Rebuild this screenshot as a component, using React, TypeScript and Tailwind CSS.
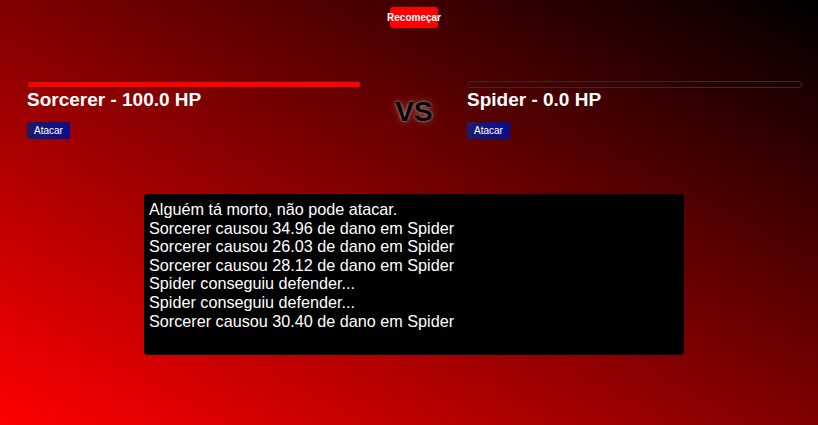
export default function App() {
  const logs = [
    "Alguém tá morto, não pode atacar.",
    "Sorcerer causou 34.96 de dano em Spider",
    "Sorcerer causou 26.03 de dano em Spider",
    "Sorcerer causou 28.12 de dano em Spider",
    "Spider conseguiu defender...",
    "Spider conseguiu defender...",
    "Sorcerer causou 30.40 de dano em Spider",
  ];
  return (
    <div
      className="w-[818px] h-[425px] overflow-hidden bg-[linear-gradient(to_top_right,#ff0000,#000000)] flex flex-col"
      style={{ fontFamily: '"Liberation Sans", Arial, sans-serif' }}
    >
      <div className="pl-[390px] pt-[7px]">
        <button className="w-[48px] h-[21px] bg-[#ff0000] rounded-[3px] text-white text-[10px] font-bold flex items-center justify-center">
          Recomeçar
        </button>
      </div>

      <div className="flex items-start pl-[27px] mt-[53px]">
        <div className="w-[334px] flex flex-col">
          <div className="h-[7px] rounded-[3px] border border-[#6a1414] bg-[#ff0000]" />
          <div className="text-white text-[19px] font-bold leading-[23px]">Sorcerer - 100.0 HP</div>
          <button className="mt-[11px] w-[43px] h-[17px] rounded-[2px] bg-[linear-gradient(to_right,#1c1c68,#0c0c8c)] text-white text-[10px] flex items-center justify-center">
            Atacar
          </button>
        </div>
        <div className="w-[106px] flex justify-center mt-[15px]">
          <div
            className="text-black text-[28px] font-bold leading-[32px]"
            style={{ textShadow: "0 0 3px rgba(255,255,255,0.6), 0 0 8px rgba(255,255,255,0.3)" }}
          >
            VS
          </div>
        </div>
        <div className="w-[335px] flex flex-col">
          <div className="h-[7px] rounded-[3px] border border-[#3a2a2a]" />
          <div className="text-white text-[19px] font-bold leading-[23px]">Spider - 0.0 HP</div>
          <button className="mt-[11px] w-[43px] h-[17px] rounded-[2px] bg-[linear-gradient(to_right,#1c1c68,#0c0c8c)] text-white text-[10px] flex items-center justify-center">
            Atacar
          </button>
        </div>
      </div>

      <div className="ml-[144px] mt-[55px] w-[540px] h-[161px] bg-black rounded-[4px] pl-[5px] pt-[6px] text-white text-[16.2px] leading-[18.6px]">
        {logs.map((l, i) => (
          <div key={i}>{l}</div>
        ))}
      </div>
    </div>
  );
}
